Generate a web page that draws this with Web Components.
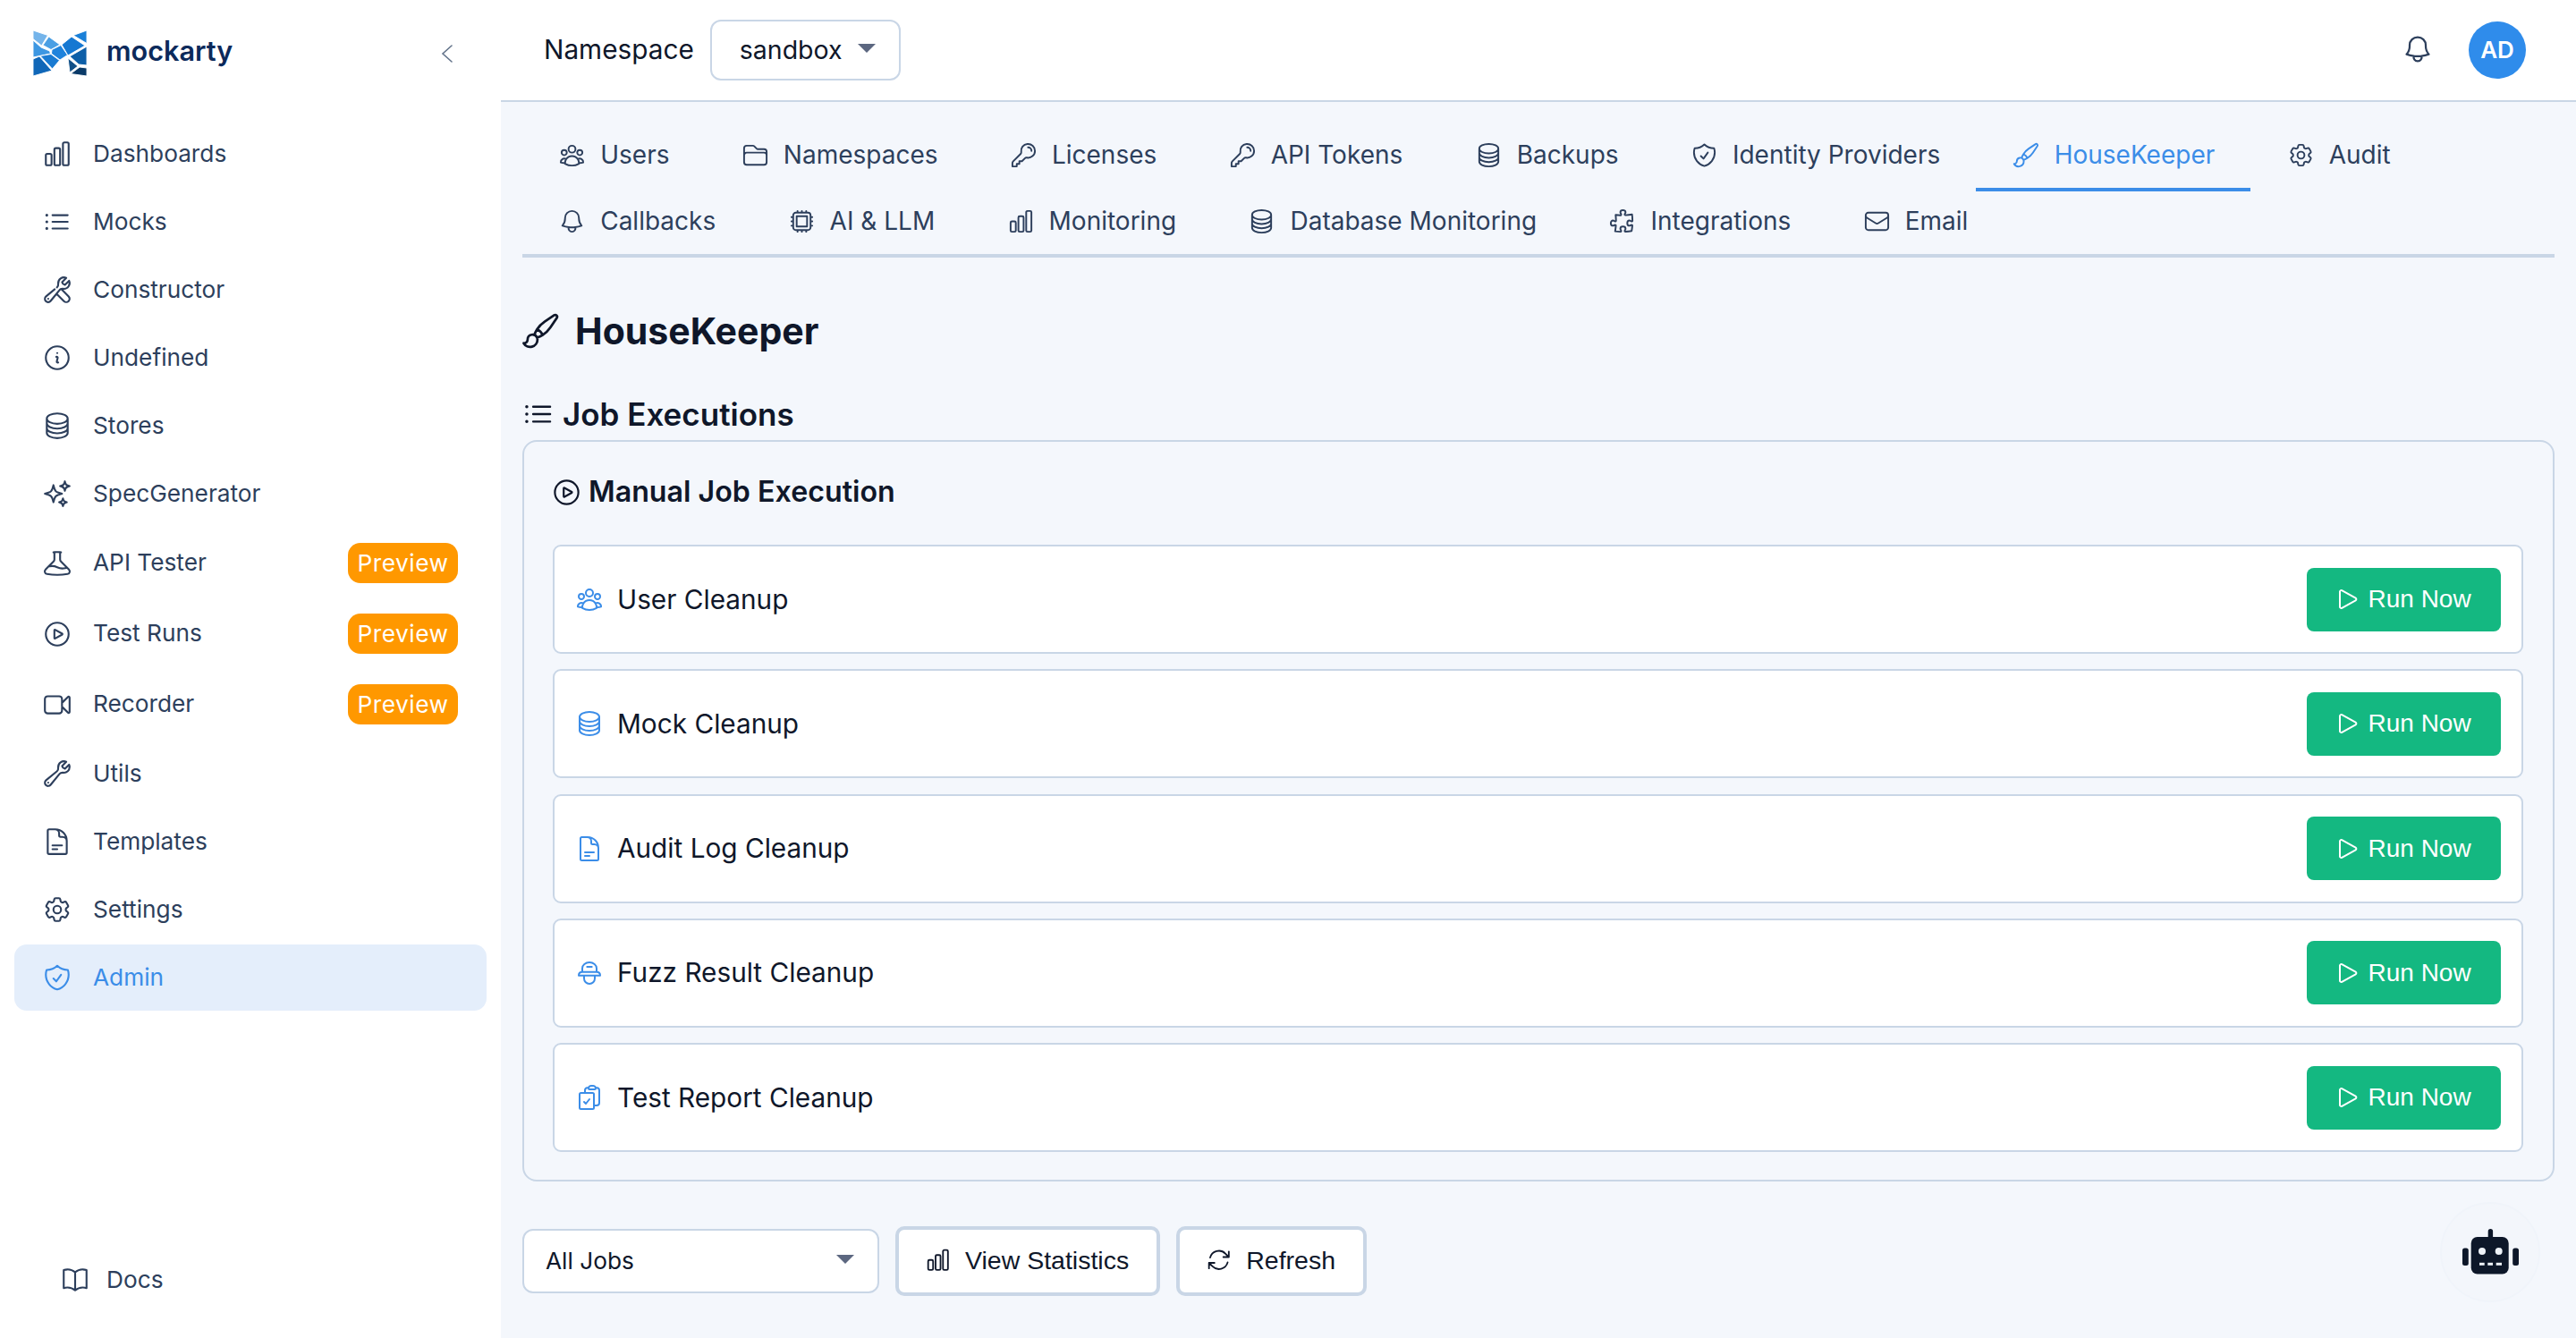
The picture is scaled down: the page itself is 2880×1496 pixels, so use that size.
<!DOCTYPE html>
<html lang="en"><head><meta charset="utf-8"><title>Mockarty</title>
<style>
html,body{margin:0;padding:0;width:2880px;height:1496px;overflow:hidden;background:#f4f7fc;font-family:Inter,"Liberation Sans",sans-serif}
</style></head><body>
<app-shell>
  <side-nav slot="side">
    <nav-item icon="bars">Dashboards</nav-item>
    <nav-item icon="list">Mocks</nav-item>
    <nav-item icon="tools">Constructor</nav-item>
    <nav-item icon="info">Undefined</nav-item>
    <nav-item icon="stack">Stores</nav-item>
    <nav-item icon="sparkles">SpecGenerator</nav-item>
    <nav-item icon="beaker" badge="Preview">API Tester</nav-item>
    <nav-item icon="playc" badge="Preview">Test Runs</nav-item>
    <nav-item icon="video" badge="Preview">Recorder</nav-item>
    <nav-item icon="wrench">Utils</nav-item>
    <nav-item icon="doc">Templates</nav-item>
    <nav-item icon="cog">Settings</nav-item>
    <nav-item icon="shield" active>Admin</nav-item>
  </side-nav>
  <top-bar slot="top"></top-bar>
  <tab-bar>
    <tab-item icon="users">Users</tab-item>
    <tab-item icon="folder">Namespaces</tab-item>
    <tab-item icon="key">Licenses</tab-item>
    <tab-item icon="key">API Tokens</tab-item>
    <tab-item icon="stack">Backups</tab-item>
    <tab-item icon="shield">Identity Providers</tab-item>
    <tab-item icon="brush" active>HouseKeeper</tab-item>
    <tab-item icon="cog">Audit</tab-item>
    <tab-item icon="bell">Callbacks</tab-item>
    <tab-item icon="cpu">AI &amp; LLM</tab-item>
    <tab-item icon="bars">Monitoring</tab-item>
    <tab-item icon="stack">Database Monitoring</tab-item>
    <tab-item icon="puzzle">Integrations</tab-item>
    <tab-item icon="mail">Email</tab-item>
  </tab-bar>
  <page-heading icon="brush" size="44" level="1">HouseKeeper</page-heading>
  <page-heading icon="list" size="38" level="2">Job Executions</page-heading>
  <job-card heading="Manual Job Execution">
    <job-row icon="users">User Cleanup</job-row>
    <job-row icon="stack">Mock Cleanup</job-row>
    <job-row icon="doc">Audit Log Cleanup</job-row>
    <job-row icon="hat">Fuzz Result Cleanup</job-row>
    <job-row icon="clip">Test Report Cleanup</job-row>
  </job-card>
  <control-row>
    <select-box wide>All Jobs</select-box>
    <outline-button icon="bars">View Statistics</outline-button>
    <outline-button icon="refresh">Refresh</outline-button>
  </control-row>
  <robot-fab slot="overlay"></robot-fab>
</app-shell>
<script>
const P={
bars:'M3 13.125C3 12.504 3.504 12 4.125 12h2.25c.621 0 1.125.504 1.125 1.125v6.75C7.5 20.496 6.996 21 6.375 21h-2.25A1.125 1.125 0 013 19.875v-6.75zM9.75 8.625c0-.621.504-1.125 1.125-1.125h2.25c.621 0 1.125.504 1.125 1.125v11.25c0 .621-.504 1.125-1.125 1.125h-2.25a1.125 1.125 0 01-1.125-1.125V8.625zM16.5 4.125c0-.621.504-1.125 1.125-1.125h2.25C20.496 3 21 3.504 21 4.125v15.75c0 .621-.504 1.125-1.125 1.125h-2.25a1.125 1.125 0 01-1.125-1.125V4.125z',
list:'M8.25 6.75h12M8.25 12h12m-12 5.25h12M3.75 6.75h.007v.008H3.75V6.75zm.375 0a.375.375 0 11-.75 0 .375.375 0 01.75 0zM3.75 12h.007v.008H3.75V12zm.375 0a.375.375 0 11-.75 0 .375.375 0 01.75 0zm-.375 5.25h.007v.008H3.75v-.008zm.375 0a.375.375 0 11-.75 0 .375.375 0 01.75 0z',
tools:'M11.42 15.17L17.25 21A2.652 2.652 0 0021 17.25l-5.877-5.877M11.42 15.17l2.496-3.03c.317-.384.74-.626 1.208-.766M11.42 15.17l-4.655 5.653a2.548 2.548 0 11-3.586-3.586l6.837-5.63m5.108-.233c.55-.164 1.163-.188 1.743-.14a4.5 4.5 0 004.486-6.336l-3.276 3.277a3.004 3.004 0 01-2.25-2.25l3.276-3.276a4.5 4.5 0 00-6.336 4.486c.091 1.076-.071 2.264-.904 2.95l-.102.085M4.867 19.125h.008v.008h-.008v-.008z',
info:'M11.25 11.25l.041-.02a.75.75 0 011.063.852l-.708 2.836a.75.75 0 001.063.853l.041-.021M21 12a9 9 0 11-18 0 9 9 0 0118 0zm-9-3.75h.008v.008H12V8.25z',
stack:'M20.25 6.375c0 2.278-3.694 4.125-8.25 4.125S3.75 8.653 3.75 6.375m16.5 0c0-2.278-3.694-4.125-8.25-4.125S3.75 4.097 3.75 6.375m16.5 0v11.25c0 2.278-3.694 4.125-8.25 4.125s-8.25-1.847-8.25-4.125V6.375m16.5 0v3.75m-16.5-3.75v3.75m16.5 0v3.75C20.25 16.153 16.556 18 12 18s-8.25-1.847-8.25-4.125v-3.75m16.5 0c0 2.278-3.694 4.125-8.25 4.125s-8.25-1.847-8.25-4.125',
sparkles:'M9.813 15.904L9 18.75l-.813-2.846a4.5 4.5 0 00-3.09-3.09L2.25 12l2.846-.813a4.5 4.5 0 003.09-3.09L9 5.25l.813 2.846a4.5 4.5 0 003.09 3.09L15.75 12l-2.846.813a4.5 4.5 0 00-3.09 3.09zM18.259 8.715L18 9.75l-.259-1.035a3.375 3.375 0 00-2.455-2.456L14.25 6l1.036-.259a3.375 3.375 0 002.455-2.456L18 2.25l.259 1.035a3.375 3.375 0 002.456 2.456L21.75 6l-1.035.259a3.375 3.375 0 00-2.456 2.456zM16.894 20.567L16.5 21.75l-.394-1.183a2.25 2.25 0 00-1.423-1.423L13.5 18.75l1.183-.394a2.25 2.25 0 001.423-1.423l.394-1.183.394 1.183a2.25 2.25 0 001.423 1.423l1.183.394-1.183.394a2.25 2.25 0 00-1.423 1.423z',
beaker:'M9.75 3.104v5.714a2.25 2.25 0 01-.659 1.591L5 14.5M9.75 3.104c-.251.023-.501.05-.75.082m.75-.082a24.301 24.301 0 014.5 0m0 0v5.714c0 .597.237 1.17.659 1.591L19.8 15.3M14.25 3.104c.251.023.501.05.75.082M19.8 15.3l-1.57.393A9.065 9.065 0 0112 15a9.065 9.065 0 00-6.23-.693L5 14.5m14.8.8l1.402 1.402c1.232 1.232.65 3.318-1.067 3.611A48.309 48.309 0 0112 21c-2.773 0-5.491-.235-8.135-.687-1.718-.293-2.3-2.379-1.067-3.61L5 14.5',
playc:'M21 12a9 9 0 11-18 0 9 9 0 0118 0zM15.91 11.672a.375.375 0 010 .656l-5.603 3.113a.375.375 0 01-.557-.328V8.887c0-.286.307-.466.557-.327l5.603 3.112z',
video:'M15.75 10.5l4.72-4.72a.75.75 0 011.28.53v11.38a.75.75 0 01-1.28.53l-4.72-4.72M4.5 18.75h9a2.25 2.25 0 002.25-2.25v-9a2.25 2.25 0 00-2.25-2.25h-9A2.25 2.25 0 002.25 7.5v9a2.25 2.25 0 002.25 2.25z',
wrench:'M21.75 6.75a4.5 4.5 0 01-4.884 4.484c-1.076-.091-2.264.071-2.95.904l-7.152 8.684a2.548 2.548 0 11-3.586-3.586l8.684-7.152c.833-.686.995-1.874.904-2.95a4.5 4.5 0 016.336-4.486l-3.276 3.276a3.004 3.004 0 002.25 2.25l3.276-3.276c.256.565.398 1.192.398 1.852zM4.867 19.125h.008v.008h-.008v-.008z',
doc:'M19.5 14.25v-2.625a3.375 3.375 0 00-3.375-3.375h-1.5A1.125 1.125 0 0113.5 7.125v-1.5a3.375 3.375 0 00-3.375-3.375H8.25m0 12.75h7.5m-7.5 3H12M10.5 2.25H5.625c-.621 0-1.125.504-1.125 1.125v17.25c0 .621.504 1.125 1.125 1.125h12.75c.621 0 1.125-.504 1.125-1.125V11.25a9 9 0 00-9-9z',
cog:'M9.594 3.94c.09-.542.56-.94 1.11-.94h2.593c.55 0 1.02.398 1.11.94l.213 1.281c.063.374.313.686.645.87.074.04.147.083.22.127.324.196.72.257 1.075.124l1.217-.456a1.125 1.125 0 011.37.49l1.296 2.247a1.125 1.125 0 01-.26 1.431l-1.003.827c-.293.24-.438.613-.431.992a6.759 6.759 0 010 .255c-.007.378.138.75.43.99l1.005.828c.424.35.534.954.26 1.43l-1.298 2.247a1.125 1.125 0 01-1.369.491l-1.217-.456c-.355-.133-.75-.072-1.076.124a6.57 6.57 0 01-.22.128c-.331.183-.581.495-.644.869l-.213 1.28c-.09.543-.56.941-1.11.941h-2.594c-.55 0-1.02-.398-1.11-.94l-.213-1.281c-.062-.374-.312-.686-.644-.87a6.52 6.52 0 01-.22-.127c-.325-.196-.72-.257-1.076-.124l-1.217.456a1.125 1.125 0 01-1.369-.49l-1.297-2.247a1.125 1.125 0 01.26-1.431l1.004-.827c.292-.24.437-.613.43-.992a6.932 6.932 0 010-.255c.007-.378-.138-.75-.43-.99l-1.004-.828a1.125 1.125 0 01-.26-1.43l1.297-2.247a1.125 1.125 0 011.37-.491l1.216.456c.356.133.751.072 1.076-.124.072-.044.146-.087.22-.128.332-.183.582-.495.644-.869l.214-1.281zM15 12a3 3 0 11-6 0 3 3 0 016 0z',
shield:'M9 12.75L11.25 15 15 9.75m-3-7.036A11.959 11.959 0 013.598 6 11.99 11.99 0 003 9.749c0 5.592 3.824 10.29 9 11.623 5.176-1.332 9-6.03 9-11.622 0-1.31-.21-2.571-.598-3.751h-.152c-3.196 0-6.1-1.248-8.25-3.285z',
book:'M12 6.042A8.967 8.967 0 006 3.75c-1.052 0-2.062.18-3 .512v14.25A8.987 8.987 0 016 18c2.305 0 4.408.867 6 2.292m0-14.25a8.966 8.966 0 016-2.292c1.052 0 2.062.18 3 .512v14.25A8.987 8.987 0 0018 18a8.967 8.967 0 00-6 2.292m0-14.25v14.25',
users:'M18 18.72a9.094 9.094 0 003.741-.479 3 3 0 00-4.682-2.72m.94 3.198l.001.031c0 .225-.012.447-.037.666A11.944 11.944 0 0112 21c-2.17 0-4.207-.576-5.963-1.584A6.062 6.062 0 016 18.719m12 0a5.971 5.971 0 00-.941-3.197m0 0A5.995 5.995 0 0012 12.75a5.995 5.995 0 00-5.058 2.772m0 0a3 3 0 00-4.681 2.72 8.986 8.986 0 003.74.477m.94-3.197a5.971 5.971 0 00-.94 3.197M15 6.75a3 3 0 11-6 0 3 3 0 016 0zm6 3a2.25 2.25 0 11-4.5 0 2.25 2.25 0 014.5 0zm-13.5 0a2.25 2.25 0 11-4.5 0 2.25 2.25 0 014.5 0z',
folder:'M2.25 12.75V12A2.25 2.25 0 014.5 9.75h15A2.25 2.25 0 0121.75 12v.75m-8.69-6.44l-2.12-2.12a1.5 1.5 0 00-1.061-.44H4.5A2.25 2.25 0 002.25 6v12a2.25 2.25 0 002.25 2.25h15A2.25 2.25 0 0021.75 18V9a2.25 2.25 0 00-2.25-2.25h-5.379a1.5 1.5 0 01-1.06-.44z',
key:'M15.75 5.25a3 3 0 013 3m3 0a6 6 0 01-7.029 5.912c-.563-.097-1.159.026-1.563.43L10.5 17.25H8.25v2.25H6v2.25H2.25v-2.818c0-.597.237-1.17.659-1.591l6.499-6.499c.404-.404.527-1 .43-1.563A6 6 0 1121.75 8.25z',
bell:'M14.857 17.082a23.848 23.848 0 005.454-1.31A8.967 8.967 0 0118 9.75v-.7V9A6 6 0 006 9v.75a8.967 8.967 0 01-2.312 6.022c1.733.64 3.56 1.085 5.455 1.31m5.714 0a24.255 24.255 0 01-5.714 0m5.714 0a3 3 0 11-5.714 0',
cpu:'M8.25 3v1.5M4.5 8.25H3m18 0h-1.5M4.5 12H3m18 0h-1.5m-15 3.75H3m18 0h-1.5M8.25 19.5V21M12 3v1.5m0 15V21m3.75-18v1.5m0 15V21m-9-1.5h10.5a2.25 2.25 0 002.25-2.25V6.75a2.25 2.25 0 00-2.25-2.25H6.75A2.25 2.25 0 004.5 6.75v10.5a2.25 2.25 0 002.25 2.25zm.75-12h9v9h-9v-9z',
puzzle:'M14.25 6.087c0-.355.186-.676.401-.959.221-.29.349-.634.349-1.003 0-1.036-1.007-1.875-2.25-1.875s-2.25.84-2.25 1.875c0 .369.128.713.349 1.003.215.283.401.604.401.959v0a.64.64 0 01-.657.643 48.39 48.39 0 01-4.163-.3c.186 1.613.293 3.25.315 4.907a.656.656 0 01-.658.663v0c-.355 0-.676-.186-.959-.401a1.647 1.647 0 00-1.003-.349c-1.036 0-1.875 1.007-1.875 2.25s.84 2.25 1.875 2.25c.369 0 .713-.128 1.003-.349.283-.215.604-.401.959-.401v0c.31 0 .555.26.532.57a48.039 48.039 0 01-.642 5.056c1.518.19 3.058.309 4.616.354a.64.64 0 00.657-.643v0c0-.355-.186-.676-.401-.959a1.647 1.647 0 01-.349-1.003c0-1.035 1.008-1.875 2.25-1.875 1.243 0 2.25.84 2.25 1.875 0 .369-.128.713-.349 1.003-.215.283-.4.604-.4.959v0c0 .333.277.599.61.58a48.1 48.1 0 005.427-.63 48.05 48.05 0 00.582-4.717.532.532 0 00-.533-.57v0c-.355 0-.676.186-.959.401-.29.221-.634.349-1.003.349-1.035 0-1.875-1.007-1.875-2.25s.84-2.25 1.875-2.25c.37 0 .713.128 1.003.349.283.215.604.401.96.401v0a.656.656 0 00.658-.663 48.422 48.422 0 00-.37-5.36c-1.886.342-3.81.574-5.766.689a.578.578 0 01-.61-.58v0z',
mail:'M21.75 6.75v10.5a2.25 2.25 0 01-2.25 2.25h-15a2.25 2.25 0 01-2.25-2.25V6.75m19.5 0A2.25 2.25 0 0019.5 4.5h-15a2.25 2.25 0 00-2.25 2.25m19.5 0v.243a2.25 2.25 0 01-1.07 1.916l-7.5 4.615a2.25 2.25 0 01-2.36 0L3.32 8.91a2.25 2.25 0 01-1.07-1.916V6.75',
brush:'M9.53 16.122a3 3 0 00-5.78 1.128 2.25 2.25 0 01-2.4 2.245 4.5 4.5 0 008.4-2.245c0-.399-.078-.78-.22-1.128zm0 0a15.998 15.998 0 003.388-1.62m-5.043-.025a15.994 15.994 0 011.622-3.395m3.42 3.42a15.995 15.995 0 004.764-4.648l3.876-5.814a1.151 1.151 0 00-1.597-1.597L14.146 6.32a15.996 15.996 0 00-4.649 4.763m3.42 3.42a6.776 6.776 0 00-3.42-3.42',
play:'M5.25 5.653c0-.856.917-1.398 1.667-.986l11.54 6.348a1.125 1.125 0 010 1.971l-11.54 6.347a1.125 1.125 0 01-1.667-.985V5.653z',
refresh:'M16.023 9.348h4.992v-.001M2.985 19.644v-4.992m0 0h4.992m-4.993 0l3.181 3.183a8.25 8.25 0 0013.803-3.7M4.031 9.865a8.25 8.25 0 0113.803-3.7l3.181 3.182m0-4.991v4.99',
clip:'M11.35 3.836c-.065.21-.1.433-.1.664 0 .414.336.75.75.75h4.5a.75.75 0 00.75-.75 2.25 2.25 0 00-.1-.664m-5.8 0A2.251 2.251 0 0113.5 2.25H15c1.012 0 1.867.668 2.15 1.586m-5.8 0c-.376.023-.75.05-1.124.08C9.095 4.01 8.25 4.973 8.25 6.108V8.25m8.9-4.414c.376.023.75.05 1.124.08 1.131.094 1.976 1.057 1.976 2.192V16.5A2.25 2.25 0 0118 18.75h-2.25m-7.5-10.5H4.875c-.621 0-1.125.504-1.125 1.125v11.25c0 .621.504 1.125 1.125 1.125h9.75c.621 0 1.125-.504 1.125-1.125V18.75m-7.5-10.5h6.375c.621 0 1.125.504 1.125 1.125v9.375m-8.25-3l1.5 1.5 3-3.75',
hat:'M6 11V8a6 5 0 0112 0v3M10 6.75h4M6 11c-1.7 0-3 1.2-3 3h18c0-1.8-1.3-3-3-3zM7.5 14v2.5a4.5 4.5 0 009 0V14'
};
const BORDER='#c9d6e6';
function define(tag,css,html,init){
  customElements.define(tag,class extends HTMLElement{
    constructor(){super();this.attachShadow({mode:'open'});}
    connectedCallback(){
      const h=typeof html==='function'?html(this):html;
      this.shadowRoot.innerHTML='<style>'+css+'</style>'+h;
      if(init)init(this);
    }
  });
}
define('ui-icon',':host{display:inline-flex;flex:none;line-height:0}svg{display:block}',
  el=>{const s=el.getAttribute('size')||31;const w=el.getAttribute('stroke')||1.5;
    return `<svg width="${s}" height="${s}" viewBox="0 0 24 24" fill="none" stroke="currentColor" stroke-width="${w}" stroke-linecap="round" stroke-linejoin="round"><path d="${P[el.getAttribute('name')]}"/></svg>`;});
define('app-shell',`
  :host{display:grid;grid-template-columns:560px 1fr;width:2880px;height:1496px;position:relative;overflow:hidden;background:#f4f7fc;color:#0f172a}
  .side{grid-row:1;grid-column:1;display:flex;min-height:0}
  .col{grid-row:1;grid-column:2;display:flex;flex-direction:column;min-width:0}
  .content{display:flex;flex-direction:column;padding:26px 24px 0}
`,`<div class="side"><slot name="side"></slot></div>
   <div class="col"><slot name="top"></slot><div class="content"><slot></slot></div></div>
   <slot name="overlay"></slot>`);
define('brand-logo',`:host{display:flex;align-items:center;gap:22px}
  span{font:600 30.6px/1 Inter,sans-serif;color:#0c2a5b;margin-top:-4px}svg{display:block}`,
`<svg width="60" height="51" viewBox="0 0 60 51">
<g stroke="#fff" stroke-width=".9" stroke-linejoin="round">
<polygon points="0,0 16.5,5.5 9.5,17 0,9.5" fill="#74b4ea"/>
<polygon points="17.5,7 30,16 20,21.5 11,16.5" fill="#4a9fe4"/>
<polygon points="0,11 9,19 18.5,23 19.5,26 0,30" fill="#3d97e2"/>
<polygon points="21,21.5 31,16.5 38.5,27.5 30,33 20.5,26" fill="#1f83dc"/>
<polygon points="0,32 7,29 21,45 0,51" fill="#1067b8"/>
<polygon points="8,28.5 20,26.5 29.5,33.5 21.5,43" fill="#1a7bd2"/>
<polygon points="45,5.5 60,0 60,14.5" fill="#1a80d8"/>
<polygon points="43,7 58,17 39,28 32,16" fill="#1578d2"/>
<polygon points="41,29 60,18 60,39 51,38" fill="#0e5fa8"/>
<polygon points="39,31 50,40 41,47" fill="#115088"/>
<polygon points="42,48.5 52,41 60,42 60,51" fill="#0a3a68"/>
</g></svg><span>mockarty</span>`);
define('side-nav',`
  :host{display:flex;flex-direction:column;width:560px;height:1496px;background:#fff;color:#2d3f5c;box-sizing:border-box}
  header{height:135px;box-sizing:border-box;display:flex;align-items:center;justify-content:space-between;padding:0 52px 16px 37px}
  .chev{color:#64748b}
  nav{display:flex;flex-direction:column;gap:2px;padding:0 16px}
  .spacer{flex:1}
  footer{display:flex;align-items:center;gap:18px;padding:0 0 45px 67px;font:400 26.25px/40px Inter,sans-serif}
`,`<header><brand-logo></brand-logo><svg class="chev" width="16" height="24" viewBox="0 0 16 24" fill="none" stroke="currentColor" stroke-width="1.6" stroke-linecap="round"><path d="M13 3L3 12l10 9"/></svg></header>
  <nav><slot></slot></nav><div class="spacer"></div>
  <footer><ui-icon name="book" size="34"></ui-icon><span>Docs</span></footer>`);
define('nav-item',`
  :host{display:flex;align-items:center;height:74px;box-sizing:border-box;padding:0 0 0 31px;gap:23px;border-radius:14px;font:400 26.25px/1 Inter,sans-serif;color:#2d3f5c;position:relative}
  :host([badge]){height:77px}
  :host([active]){background:#e4eefb;color:#3b8de8}
  .t{flex:1;white-space:nowrap}
  .b{margin-right:32px;background:#ff9800;color:#fff;font:400 26.25px/45px Inter,sans-serif;height:45px;width:123px;box-sizing:border-box;text-align:center;border-radius:14px;letter-spacing:.5px}
`,el=>{const b=el.getAttribute('badge');
  return `<ui-icon name="${el.getAttribute('icon')}" size="34"></ui-icon><span class="t"><slot></slot></span>${b?`<span class="b">${b}</span>`:''}`;});
define('select-box',`
  :host{display:inline-flex;align-items:center;justify-content:space-between;box-sizing:border-box;background:#fff;border:2px solid ${BORDER};border-radius:12px;height:68px;width:213px;padding:0 26px 0 31px;font:400 28.5px/1 Inter,sans-serif;color:#0f172a;white-space:nowrap}
  :host([wide]){width:399px;height:72px;padding:0 26px 0 24px;font-size:26.25px}
  i{display:block;width:0;height:0;border-left:10px solid transparent;border-right:10px solid transparent;border-top:10px solid #5c6780;margin-top:-4px}
`,`<span><slot></slot></span><i></i>`);
define('top-bar',`
  :host{display:flex;align-items:center;gap:18px;height:114px;box-sizing:border-box;background:#fff;border-bottom:2px solid ${BORDER};padding:0 56px 0 48px;font:400 29.75px/1 Inter,sans-serif;color:#0f172a}
  .s{flex:1}
  .bell{color:#2d3f5c;margin-right:21px;margin-top:-2px}
  .av{width:64px;height:64px;border-radius:50%;background:#2f8ceb;color:#fff;font:600 26px/64px Inter,sans-serif;text-align:center}
`,`<span>Namespace</span><select-box>sandbox</select-box><span class="s"></span><ui-icon class="bell" name="bell" size="36"></ui-icon><span class="av">AD</span>`);
define('tab-bar',`
  :host{display:flex;flex-wrap:wrap;align-content:flex-start;height:148px;box-shadow:inset 0 -4px 0 ${BORDER}}
`,`<slot></slot>`);
define('tab-item',`
  :host{display:flex;align-items:center;gap:16px;height:74px;box-sizing:border-box;padding:0 40.2px 4px;border-bottom:4px solid transparent;font:400 28px/1 Inter,sans-serif;color:#2d3f5c;white-space:nowrap}
  :host([active]){color:#3b8de8;border-bottom-color:#3b8de8}
`,el=>`<ui-icon name="${el.getAttribute('icon')}" size="31"></ui-icon><span><slot></slot></span>`);
define('page-heading',`
  :host{display:flex;align-items:center;color:#0f172a;white-space:nowrap}
  :host([level="1"]){height:56px;margin-top:54px;gap:16px;font:700 41px/1 Inter,sans-serif}
  :host([level="2"]){height:44px;margin-top:43px;margin-bottom:7px;gap:8px;font:600 35px/1 Inter,sans-serif}
  ui-icon{margin-left:-1px}
`,el=>`<ui-icon name="${el.getAttribute('icon')}" size="${el.getAttribute('size')}"></ui-icon><span><slot></slot></span>`);
define('job-card',`
  :host{display:block;border:2px solid ${BORDER};border-radius:16px;padding:36px 33px 30px 32px;height:829px;box-sizing:border-box}
  h3{display:flex;align-items:center;gap:7px;margin:0 0 39px;height:40px;font:600 32.2px/1 Inter,sans-serif;color:#0f172a}
  ui-icon{margin-left:-2px}
  .rows{display:flex;flex-direction:column;gap:17.25px}
`,el=>`<h3><ui-icon name="playc" size="35"></ui-icon><span>${el.getAttribute('heading')}</span></h3><div class="rows"><slot></slot></div>`);
define('job-row',`
  :host{display:flex;align-items:center;justify-content:space-between;height:122px;box-sizing:border-box;background:#fff;border:2px solid ${BORDER};border-radius:9px;padding:0 23px 0 23px;font:400 29.75px/1 Inter,sans-serif;color:#0f172a}
  .l{display:flex;align-items:center;gap:15px}
  .x{padding-top:1px}
  ui-icon{color:#3b8de8}
`,el=>`<span class="l"><ui-icon name="${el.getAttribute('icon')}" size="32"></ui-icon><span class="x"><slot></slot></span></span><run-button></run-button>`);
define('run-button',`
  :host{display:inline-flex;align-items:center;gap:6.5px;height:71px;width:217px;box-sizing:border-box;padding:0 0 0 30px;background:#14b881;border-radius:8px;color:#fff;font:400 28px/1 "Liberation Sans",sans-serif;white-space:nowrap}
`,`<ui-icon name="play" size="32"></ui-icon><span>Run Now</span>`);
define('control-row',`:host{display:flex;align-items:center;gap:18px;margin-top:50px}`,`<slot></slot>`);
define('outline-button',`
  :host{display:inline-flex;align-items:center;gap:15.5px;height:78px;box-sizing:border-box;padding:0 31px 2px 29px;background:#fff;border:4px solid ${BORDER};border-radius:10px;font:400 28.5px/1 "Liberation Sans",sans-serif;color:#0f172a;white-space:nowrap}
`,el=>`<ui-icon name="${el.getAttribute('icon')}" size="29.5"></ui-icon><span><slot></slot></span>`);
define('robot-fab',`
  :host{position:absolute;right:40px;bottom:40px;width:112px;height:112px;border-radius:50%;box-sizing:border-box;border:2px solid #f0f4fa;background:#f3f6fb;display:flex;align-items:center;justify-content:center}
  svg{display:block;margin-top:-2px}
`,`<svg width="63" height="51" viewBox="0 0 63 51" fill="#0d1729">
<rect x="28.7" y="0" width="5.4" height="12" rx="2.7"/>
<rect x="9.7" y="9" width="42" height="41.5" rx="7"/>
<rect x="0" y="21.5" width="6.8" height="19.5" rx="2.5"/>
<rect x="56.2" y="21.5" width="6.8" height="19.5" rx="2.5"/>
<g fill="#eef2f8"><circle cx="22" cy="25" r="4"/><circle cx="40.7" cy="25" r="4"/>
<rect x="19" y="37.8" width="5.7" height="3"/><rect x="28.3" y="37.8" width="5.7" height="3"/><rect x="37.7" y="37.8" width="6.3" height="3"/></g></svg>`);
</script>
</body></html>
